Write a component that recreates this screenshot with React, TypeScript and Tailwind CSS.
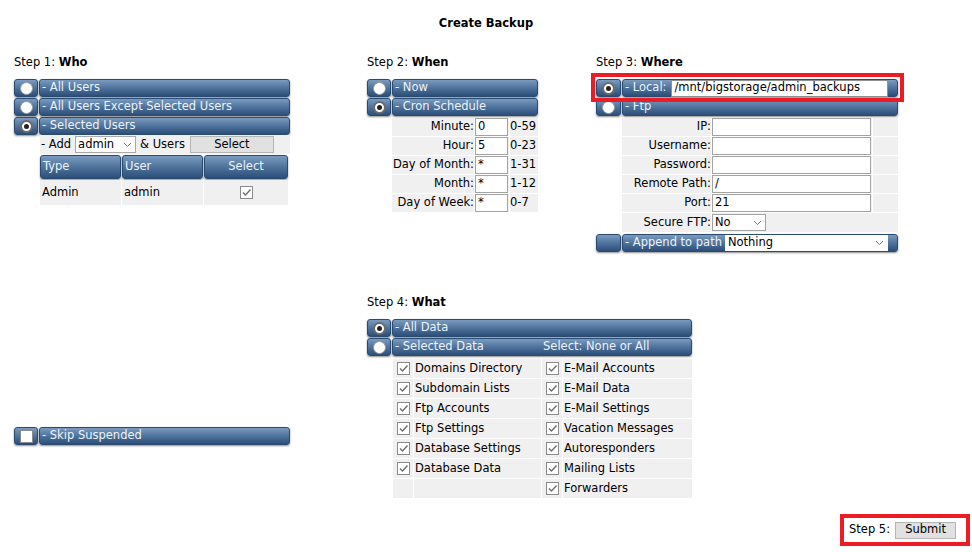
import type { ReactNode } from "react";

const BAR =
  "h-[18px] rounded-[3px] border border-[#2a4a70] bg-linear-to-b from-[#7b9bc0] via-[#4f739c] to-[#2c4f79] shadow-[0_1px_2px_rgba(0,0,0,0.45)]";

function Radio({ on }: { on?: boolean }) {
  return (
    <span
      className={`flex h-[13px] w-[13px] items-center justify-center rounded-full bg-white ${
        on ? "border-2 border-[#6b6b6b]" : "border border-[#9a9a9a]"
      }`}
    >
      {on && <span className="h-[5px] w-[5px] rounded-full bg-[#222]" />}
    </span>
  );
}

function Check({ on = true }: { on?: boolean }) {
  return (
    <span className="flex h-[13px] w-[13px] items-center justify-center border border-[#8a8a8a] bg-white">
      {on && (
        <svg width="11" height="11" viewBox="0 0 11 11">
          <path d="M2 5.5 L4.5 8 L9.5 2.5" fill="none" stroke="#6e6e6e" strokeWidth="1.4" />
        </svg>
      )}
    </span>
  );
}

function Bar({
  left,
  width,
  children,
}: {
  left: ReactNode;
  width: string;
  children: ReactNode;
}) {
  return (
    <div className="flex gap-px">
      <div className={`${BAR} ${width} flex shrink-0 items-center justify-center`}>{left}</div>
      <div className={`${BAR} flex flex-1 items-center pl-[2px] text-[#eef3f8]`}>{children}</div>
    </div>
  );
}

function Heading({ n, name }: { n: number; name: string }) {
  return (
    <div className="mb-[10px] h-[14px] leading-[14px]">
      Step {n}: <b>{name}</b>
    </div>
  );
}

function Chevron() {
  return (
    <svg width="9" height="6" viewBox="0 0 9 6" className="shrink-0">
      <path d="M1 1 L4.5 4.5 L8 1" fill="none" stroke="#777" strokeWidth="1" />
    </svg>
  );
}

const CRON = [
  ["Minute:", "0", "0-59"],
  ["Hour:", "5", "0-23"],
  ["Day of Month:", "*", "1-31"],
  ["Month:", "*", "1-12"],
  ["Day of Week:", "*", "0-7"],
];

const FTP = [
  ["IP:", ""],
  ["Username:", ""],
  ["Password:", ""],
  ["Remote Path:", "/"],
  ["Port:", "21"],
];

const LEFT_DATA = [
  "Domains Directory",
  "Subdomain Lists",
  "Ftp Accounts",
  "Ftp Settings",
  "Database Settings",
  "Database Data",
  "",
];
const RIGHT_DATA = [
  "E-Mail Accounts",
  "E-Mail Data",
  "E-Mail Settings",
  "Vacation Messages",
  "Autoresponders",
  "Mailing Lists",
  "Forwarders",
];

export default function App() {
  return (
    <div className="h-[552px] w-[972px] bg-white pt-[16px] font-['DejaVu_Sans',sans-serif] text-[11.5px] text-black">
      <div className="h-[14px] text-center text-[11.5px] leading-[14px] font-bold">Create Backup</div>

      {/* top row */}
      <div className="mt-[25px] flex h-[240px] pl-[14px]">
        {/* Who */}
        <div className="flex w-[276px] flex-col">
          <Heading n={1} name="Who" />
          <div className="flex flex-col gap-px">
            <Bar left={<Radio />} width="w-[24px]">- All Users</Bar>
            <Bar left={<Radio />} width="w-[24px]">- All Users Except Selected Users</Bar>
            <Bar left={<Radio on />} width="w-[24px]">- Selected Users</Bar>
          </div>
          <div className="ml-[26px] flex h-[19px] items-center gap-[4px] bg-[#f0f0f0] pl-[1px]">
            <span>- Add</span>
            <span className="flex h-[17px] w-[61px] items-center justify-between border border-[#a9a9a9] bg-white pl-[2px] pr-[3px]">
              admin <Chevron />
            </span>
            <span>&amp; Users</span>
            <span className="ml-[1px] flex h-[17px] w-[84px] items-center justify-center border border-[#b5b5b5] bg-[#e1e1e1]">
              Select
            </span>
          </div>
          <div className="ml-[26px] mt-px flex gap-px">
            <div className={`${BAR} flex h-[24px] w-[81px] items-center pl-[2px] text-[#eef3f8]`}>Type</div>
            <div className={`${BAR} flex h-[24px] w-[81px] items-center pl-[2px] text-[#eef3f8]`}>User</div>
            <div className={`${BAR} flex h-[24px] w-[84px] items-center justify-center text-[#eef3f8]`}>Select</div>
          </div>
          <div className="ml-[26px] mt-px flex h-[25px] gap-px">
            <div className="flex w-[81px] items-center bg-[#f0f0f0] pl-[2px]">Admin</div>
            <div className="flex w-[81px] items-center bg-[#f0f0f0] pl-[2px]">admin</div>
            <div className="flex w-[84px] items-center justify-center bg-[#f0f0f0]">
              <Check />
            </div>
          </div>
        </div>

        {/* When */}
        <div className="ml-[77px] flex w-[171px] flex-col">
          <Heading n={2} name="When" />
          <div className="flex flex-col gap-px">
            <Bar left={<Radio />} width="w-[24px]">- Now</Bar>
            <Bar left={<Radio on />} width="w-[24px]">- Cron Schedule</Bar>
          </div>
          <div className="ml-[25px] mt-[2px] flex flex-col gap-px">
            {CRON.map(([label, value, range]) => (
              <div key={label} className="flex h-[18px] gap-px">
                <div className="flex w-[82px] items-center justify-end bg-[#f0f0f0]">{label}</div>
                <div className="flex w-[34px] items-center bg-[#f0f0f0]">
                  <span className="flex h-[18px] w-[33px] items-center border border-[#a3a3a3] bg-white pl-[2px]">
                    {value}
                  </span>
                </div>
                <div className="flex flex-1 items-center bg-[#f0f0f0]">{range}</div>
              </div>
            ))}
          </div>
        </div>

        {/* Where */}
        <div className="ml-[58px] flex w-[302px] flex-col">
          <Heading n={3} name="Where" />
          <div className="flex flex-col gap-px">
            <div className="relative">
              <Bar left={<Radio on />} width="w-[25px]">
                <span>- Local:</span>
                <span className="ml-[4px] flex h-[17px] w-[217px] items-center border border-[#8f8f8f] bg-white pl-[3px] text-black">
                  /mnt/bigstorage/admin_backups
                </span>
              </Bar>
              <div className="absolute -top-[6px] -bottom-[5px] -left-[5px] -right-[6px] border-4 border-[#ed1c24]" />
            </div>
            <Bar left={<Radio />} width="w-[25px]">- Ftp</Bar>
          </div>
          <div className="ml-[26px] mt-[2px] flex flex-col gap-px">
            {FTP.map(([label, value]) => (
              <div key={label} className="flex h-[18px] gap-px">
                <div className="flex w-[89px] items-center justify-end bg-[#f0f0f0]">{label}</div>
                <div className="flex w-[160px] items-center bg-[#f0f0f0]">
                  <span className="flex h-[18px] w-[159px] items-center border border-[#a3a3a3] bg-white pl-[2px]">
                    {value}
                  </span>
                </div>
                <div className="flex-1 bg-[#f0f0f0]" />
              </div>
            ))}
            <div className="flex h-[19px] gap-px">
              <div className="flex w-[89px] items-center justify-end bg-[#f0f0f0]">Secure FTP:</div>
              <div className="flex flex-1 items-center bg-[#f0f0f0]">
                <span className="flex h-[17px] w-[54px] items-center justify-between border border-[#a3a3a3] bg-white pl-[2px] pr-[3px]">
                  No <Chevron />
                </span>
              </div>
            </div>
          </div>
          <div className="mt-[2px]">
            <Bar left={null} width="w-[25px]">
              <span>- Append to path</span>
              <span className="ml-[3px] mr-[9px] flex h-[16px] flex-1 items-center justify-between bg-white pl-[3px] pr-[4px] text-black">
                Nothing <Chevron />
              </span>
            </Bar>
          </div>
        </div>
      </div>

      {/* bottom row */}
      <div className="flex pl-[14px]">
        <div className="w-[276px] pt-[132px]">
          <Bar left={<span className="h-[13px] w-[13px] border border-[#8a8a8a] bg-white" />} width="w-[24px]">
            - Skip Suspended
          </Bar>
        </div>

        <div className="ml-[77px] flex w-[325px] flex-col">
          <Heading n={4} name="What" />
          <div className="flex flex-col gap-px">
            <Bar left={<Radio on />} width="w-[24px]">- All Data</Bar>
            <Bar left={<Radio />} width="w-[24px]">
              <span className="w-[148px]">- Selected Data</span>
              <span>Select: None or All</span>
            </Bar>
          </div>
          <div className="ml-[26px] mt-[3px] flex flex-col gap-px">
            {LEFT_DATA.map((left, i) => (
              <div key={i} className="flex h-[19px] gap-px">
                <div className="flex w-[20px] items-center justify-center bg-[#f0f0f0]">{left && <Check />}</div>
                <div className="flex w-[127px] items-center bg-[#f0f0f0] pl-px">{left}</div>
                <div className="flex w-[20px] items-center justify-center bg-[#f0f0f0]">
                  <Check />
                </div>
                <div className="flex flex-1 items-center bg-[#f0f0f0] pl-px">{RIGHT_DATA[i]}</div>
              </div>
            ))}
          </div>
        </div>
      </div>

      <div className="mt-[16px] flex justify-end pr-[2px]">
        <div className="flex h-[32px] w-[130px] items-center border-4 border-[#ed1c24] pl-[5px]">
          <span>Step 5:</span>
          <span className="ml-[5px] flex h-[17px] w-[61px] items-center justify-center border border-[#b5b5b5] bg-[#e1e1e1]">
            Submit
          </span>
        </div>
      </div>
    </div>
  );
}
